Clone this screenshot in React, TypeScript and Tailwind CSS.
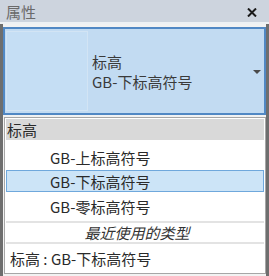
import React from "react";

export default function App() {
  const font = { fontFamily: '"Noto Sans CJK SC", "Noto Sans", sans-serif' };
  return (
    <div
      className="w-[269px] h-[276px] flex flex-col overflow-hidden bg-[#6e6e6e] text-[15px] leading-none"
      style={font}
    >
      {/* Title bar */}
      <div className="h-[22px] shrink-0 flex items-center justify-between pl-[6px] pr-[12px] bg-[#cdd4de] text-[#6a6a6a]">
        <span className="text-[15px]">属性</span>
        <svg width="10" height="9" viewBox="0 0 10 9" className="mt-[2px]">
          <path d="M1 0.5 L9 8.5 M9 0.5 L1 8.5" stroke="#1a1a1a" strokeWidth="2" />
        </svg>
      </div>
      <div className="h-[2px] shrink-0 bg-[#eef1f4]" />
      {/* Body */}
      <div className="flex-1 flex flex-col mx-[3px] bg-[#f2f2f2] pt-[3px]">
        {/* Type selector */}
        <div className="h-[88px] shrink-0 flex items-center border-2 border-[#5188c4] bg-[#c2dbf2] relative">
          <div className="ml-[1px] w-[82px] h-[80px] bg-[#c5def4] border border-[#d2e4f4]" />
          <div className="ml-[4px] flex flex-col text-[#3a3a3a] leading-[20px] mt-[1px]">
            <span>标高</span>
            <span>GB-下标高符号</span>
          </div>
          <svg width="8" height="4" viewBox="0 0 8 4" className="absolute right-[3px] top-[41px]">
            <path d="M0 0 H8 L4 4 Z" fill="#4a4a4a" />
          </svg>
        </div>
        {/* List */}
        <div className="flex-1 mt-[2px] mb-[2px] ml-[1px] border border-[#a6a6a6] bg-white flex flex-col p-[1px] text-[#2a2a2a]">
          <div className="h-[21px] shrink-0 bg-[#d9d9d9] flex items-center pl-[1px]">标高</div>
          <div className="h-[30px] shrink-0 flex items-center pl-[44px] pt-[4px]">GB-上标高符号</div>
          <div className="h-[22px] shrink-0 flex items-center pl-[43px] bg-[#cce4f7] border border-[#6fa8dc]">GB-下标高符号</div>
          <div className="h-[29px] shrink-0 flex items-center pl-[44px]">GB-零标高符号</div>
          <div className="h-[2px] shrink-0 bg-[#e3e3e3]" />
          <div className="h-[19px] shrink-0 flex items-center justify-center italic text-[#333] pl-[4px]">最近使用的类型</div>
          <div className="h-[2px] shrink-0 bg-[#e3e3e3]" />
          <div className="flex-1 flex items-center pl-[4px]">标高 : GB-下标高符号</div>
        </div>
      </div>
    </div>
  );
}
